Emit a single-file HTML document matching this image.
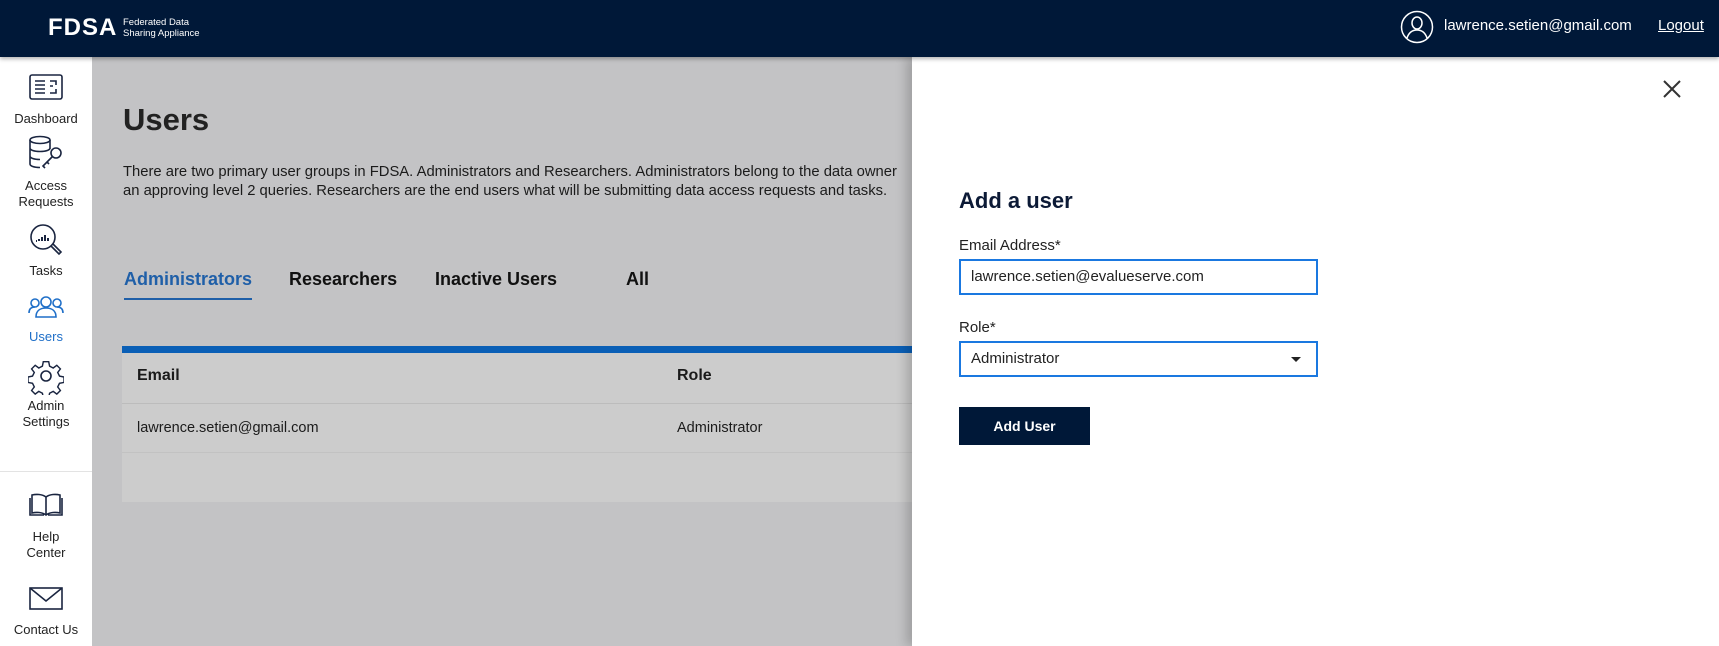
<!DOCTYPE html>
<html><head><meta charset="utf-8"><style>
*{margin:0;padding:0;box-sizing:border-box}
body{width:1719px;height:646px;overflow:hidden;font-family:"Liberation Sans",sans-serif;background:#c3c3c5;position:relative;color:#1b1b1b}
.hdr{position:absolute;left:0;top:0;width:1719px;height:57px;background:#001838;z-index:5;box-shadow:0 2px 4px rgba(0,0,0,.3)}
.abs{position:absolute}
.side{position:absolute;left:0;top:57px;width:92px;height:589px;background:#fff}
.si{position:absolute;left:0;width:92px;text-align:center;font-size:13px;line-height:15.5px;color:#222}
.si svg{display:block;margin:0 auto}
.panel{position:absolute;left:912px;top:57px;width:807px;height:589px;background:#fff;box-shadow:-6px 0 10px rgba(0,0,0,.18)}
.tab{position:absolute;top:269px;font-size:18px;font-weight:bold;color:#111}
</style></head><body>
<div class="hdr">
  <div class="abs" style="left:48px;top:14px;font-size:24px;font-weight:bold;color:#fff;letter-spacing:1px">FDSA</div>
  <div class="abs" style="left:123px;top:17px;font-size:9.5px;line-height:11px;color:#fff">Federated Data<br>Sharing Appliance</div>
  <svg class="abs" style="left:1400px;top:10px" width="34" height="34" viewBox="0 0 34 34" fill="none" stroke="#fff" stroke-width="1.5"><circle cx="17" cy="17" r="15.5"/><ellipse cx="17" cy="13" rx="5" ry="6"/><path d="M7 28c2-6 6-8 10-8s8 2 10 8"/></svg>
  <div class="abs" style="left:1444px;top:17px;font-size:15px;color:#fff">lawrence.setien@gmail.com</div>
  <div class="abs" style="left:1658px;top:17px;font-size:15px;color:#fff;text-decoration:underline">Logout</div>
</div>
<div class="side">
  <div class="si" style="top:17px"><svg width="34" height="26" viewBox="0 0 34 26" fill="none" stroke="#1a2540" stroke-width="1.6"><rect x="1" y="1" width="32" height="24" rx="2"/><path d="M6 7h10M6 11h10M6 15h10M6 19h10M21 7h6v4M21 19h6v-4M21 12h3"/></svg><div style="margin-top:11px">Dashboard</div></div>
  <div class="si" style="top:78px"><svg width="36" height="40" viewBox="0 0 36 40" fill="none" stroke="#1a2540" stroke-width="1.6"><ellipse cx="12" cy="5" rx="10" ry="3.5"/><path d="M2 5v24c0 2 4 3.5 10 3.5M22 5v9M2 13c0 2 4 3.5 10 3.5s10-1.5 10-3.5M2 21c0 2 4 3.5 10 3.5"/><circle cx="28" cy="18" r="5"/><path d="M24 22l-9 9 2 2M19 27l2 2"/></svg><div style="margin-top:3px">Access<br>Requests</div></div>
  <div class="si" style="top:166px"><svg width="34" height="34" viewBox="0 0 34 34" fill="none" stroke="#1a2540" stroke-width="1.6"><circle cx="14" cy="14" r="12"/><path d="M22 23l8 8 2-2-8-8"/><path d="M7 18h1M10 18v-2M13 18v-4M16 18v-6M19 18v-3" stroke-width="2"/></svg><div style="margin-top:6px">Tasks</div></div>
  <div class="si" style="top:239px;color:#1f6fc8"><svg width="36" height="22" viewBox="0 0 36 22" fill="none" stroke="#1f6fc8" stroke-width="1.6"><circle cx="18" cy="6" r="5"/><circle cx="7" cy="7" r="4"/><circle cx="29" cy="7" r="4"/><path d="M8 21c0-6 4-9 10-9s10 3 10 9zM1 17c0-4 2-6 6-6M35 17c0-4-2-6-6-6"/></svg><div style="margin-top:11px">Users</div></div>
  <div class="si" style="top:302px"><svg width="36" height="36" viewBox="0 0 36 36" fill="none" stroke="#1a2540" stroke-width="1.6"><path d="M15 2h6l1 5 4 2 4-3 4 4-3 4 2 4 5 1v6l-5 1-2 4 3 4-4 4-4-3-4 2-1 5h-6l-1-5-4-2-4 3-4-4 3-4-2-4-5-1v-6l5-1 2-4-3-4 4-4 4 3 4-2z" transform="scale(.9) translate(2 1)"/><circle cx="18" cy="17" r="5"/></svg><div style="margin-top:3px">Admin<br>Settings</div></div>
  <div class="abs" style="left:0;top:414px;width:92px;height:1px;background:#e3e3e3"></div>
  <div class="si" style="top:436px"><svg width="34" height="24" viewBox="0 0 34 24" fill="none" stroke="#1a2540" stroke-width="1.6"><path d="M17 4C13 1 7 1 3 2v18c4-1 10-1 14 2 4-3 10-3 14-2V2c-4-1-10-1-14 2zM17 4v18M1 5v17h14M33 5v17H19"/></svg><div style="margin-top:12px">Help<br>Center</div></div>
  <div class="si" style="top:530px"><svg width="34" height="24" viewBox="0 0 34 24" fill="none" stroke="#1a2540" stroke-width="1.6"><rect x="1" y="1" width="32" height="21"/><path d="M1 1l16 13L33 1"/></svg><div style="margin-top:11px">Contact Us</div></div>
</div>
<div class="abs" style="left:123px;top:102px;font-size:31px;font-weight:bold;color:#222;-webkit-text-stroke:0">Users</div>
<div class="abs" style="left:123px;top:163px;font-size:14.8px;line-height:19px;color:#1b1b1b;width:789px;white-space:nowrap;overflow:hidden">There are two primary user groups in FDSA. Administrators and Researchers. Administrators belong to the data owner<br>an approving level 2 queries. Researchers are the end users what will be submitting data access requests and tasks.</div>
<div class="tab" style="left:124px;color:#1f5fa8">Administrators</div>
<div class="abs" style="left:124px;top:298px;width:128px;height:2px;background:#1f5fa8"></div>
<div class="tab" style="left:289px">Researchers</div>
<div class="tab" style="left:435px">Inactive Users</div>
<div class="tab" style="left:626px">All</div>
<div class="abs" style="left:122px;top:346px;width:790px;height:7px;background:#0a5fb6"></div>
<div class="abs" style="left:122px;top:353px;width:790px;height:149px;background:#cccccc"></div>
<div class="abs" style="left:122px;top:403px;width:790px;height:1px;background:#bcbcbc"></div>
<div class="abs" style="left:122px;top:452px;width:790px;height:1px;background:#c2c2c2"></div>
<div class="abs" style="left:137px;top:367px;font-size:16px;font-weight:bold">Email</div>
<div class="abs" style="left:677px;top:367px;font-size:16px;font-weight:bold">Role</div>
<div class="abs" style="left:137px;top:420px;font-size:14.5px">lawrence.setien@gmail.com</div>
<div class="abs" style="left:677px;top:420px;font-size:14.5px">Administrator</div>
<div class="panel"></div>
<svg class="abs" style="left:1663px;top:80px" width="18" height="18" viewBox="0 0 18 18" stroke="#333" stroke-width="2"><path d="M1 1l16 16M17 1L1 17"/></svg>
<div class="abs" style="left:959px;top:188px;font-size:22px;font-weight:bold;color:#0c1a36">Add a user</div>
<div class="abs" style="left:959px;top:237px;font-size:15px;color:#222">Email Address*</div>
<div class="abs" style="left:959px;top:259px;width:359px;height:36px;border:2px solid #1a78e0;font-size:15px;padding:7px 0 0 10px;color:#222">lawrence.setien@evalueserve.com</div>
<div class="abs" style="left:959px;top:319px;font-size:15px;color:#222">Role*</div>
<div class="abs" style="left:959px;top:341px;width:359px;height:36px;border:2px solid #1a78e0;font-size:15px;padding:7px 0 0 10px;color:#222">Administrator</div>
<div class="abs" style="left:1291px;top:357px;width:0;height:0;border-left:5px solid transparent;border-right:5px solid transparent;border-top:5px solid #222"></div>
<div class="abs" style="left:959px;top:407px;width:131px;height:38px;background:#001838;color:#fff;font-size:14px;font-weight:bold;text-align:center;line-height:38px">Add User</div>
</body></html>
